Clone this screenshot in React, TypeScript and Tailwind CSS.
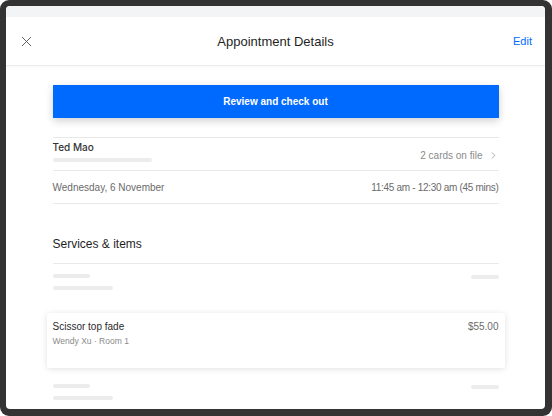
import { X, ChevronRight } from 'lucide-react';

const font = { fontFamily: '"Liberation Sans", Inter, sans-serif' };

function SkeletonRow() {
  return (
    <div className="flex items-start justify-between">
      <div className="flex flex-col gap-[8px]">
        <div className="h-[4px] w-[37px] rounded-full bg-[#ececec]" />
        <div className="h-[4px] w-[60px] rounded-full bg-[#ececec]" />
      </div>
      <div className="mt-[1px] h-[4px] w-[28px] rounded-full bg-[#ececec]" />
    </div>
  );
}

export default function App() {
  return (
    <div className="w-[552px] h-[416px] bg-white" style={font}>
      <div className="w-full h-full rounded-[9px] bg-[#333333] pt-[6px] pl-[6px] pr-[7px] pb-[7px]">
        <div className="flex h-full flex-col overflow-hidden rounded-[4px] bg-white">
          <div className="h-[11px] shrink-0 bg-[#f3f4f5]" />
          <div className="relative flex h-[49px] shrink-0 items-center justify-between border-b border-[#ececec] pl-[12px] pr-[13px] shadow-[0_1px_2px_rgba(0,0,0,0.04)]">
            <X className="h-[17px] w-[17px] text-[#555]" strokeWidth={1.3} />
            <span className="absolute left-1/2 top-1/2 -translate-x-1/2 -translate-y-1/2 pt-[1px] text-[13px] text-[#1f1f1f]">
              Appointment Details
            </span>
            <span className="text-[11px] font-medium text-[#006aff]">Edit</span>
          </div>

          <div className="mx-auto flex w-[446px] flex-col pt-[19px]">
            <button className="h-[33px] w-full bg-[#006aff] text-[10px] font-bold text-white shadow-[0_3px_8px_rgba(0,0,0,0.18)]">
              Review and check out
            </button>

            <div className="mt-[19px] border-t border-[#e8e8e8]" />
            <div className="flex h-[32px] items-start justify-between">
              <div className="flex flex-col gap-[5px] pt-[3px]">
                <span
                  className="text-[10px] font-medium leading-[12px] text-[#333]"
                  style={{ fontFamily: 'Inter, "Liberation Sans", sans-serif' }}
                >
                  Ted Mao
                </span>
                <div className="h-[4px] w-[99px] rounded-full bg-[#ececec]" />
              </div>
              <div className="flex h-full items-center gap-[5px] pt-[3px] text-[10px] text-[#8a8a8a]">
                2 cards on file
                <ChevronRight className="h-[11px] w-[11px]" strokeWidth={1.5} />
              </div>
            </div>
            <div className="border-t border-[#e8e8e8]" />
            <div className="flex h-[32px] items-center justify-between text-[10px] text-[#6b6b6b]">
              <span>Wednesday, 6 November</span>
              <span className="tracking-[-0.3px]">11:45 am - 12:30 am (45 mins)</span>
            </div>
            <div className="border-t border-[#e8e8e8]" />

            <div className="pt-[32px] pb-[11px] text-[12px] leading-[16px] text-[#1f1f1f]">
              Services &amp; items
            </div>
            <div className="border-t border-[#e8e8e8]" />

            <div className="pt-[10px]">
              <SkeletonRow />
            </div>

            <div className="-mx-[6px] mt-[23px] flex h-[55px] items-start justify-between rounded-[2px] bg-white px-[6px] pt-[8px] shadow-[0_1px_6px_rgba(0,0,0,0.12)]">
              <div className="flex flex-col gap-[3px]">
                <span className="text-[10px] leading-[12px] text-[#2a2a2a]">Scissor top fade</span>
                <span className="text-[8.5px] leading-[11px] text-[#8a8a8a]">Wendy Xu · Room 1</span>
              </div>
              <span className="text-[10px] leading-[12px] text-[#6b6b6b]">$55.00</span>
            </div>

            <div className="pt-[16px]">
              <SkeletonRow />
            </div>
          </div>
        </div>
      </div>
    </div>
  );
}
